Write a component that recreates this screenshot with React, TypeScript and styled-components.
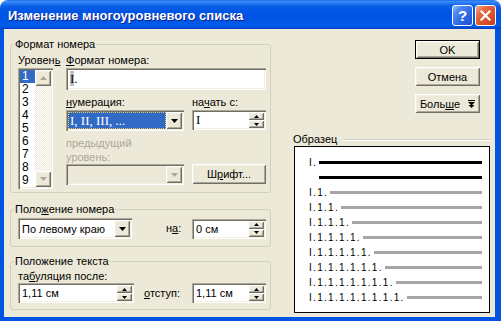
import styled, { createGlobalStyle } from "styled-components";

const GlobalStyle = createGlobalStyle`
  html, body {
    margin: 0;
    padding: 0;
    background: #ffffff;
  }
  body {
    font-family: "Liberation Sans", Arial, sans-serif;
    font-size: 11px;
    color: #000;
  }
  * {
    box-sizing: border-box;
  }
`;

const sunken = `
  box-shadow: inset 1px 1px 0 #aca899, inset 2px 2px 0 #716f64,
    inset -1px -1px 0 #ffffff, inset -2px -2px 0 #f1efe2;
`;

const raised = `
  box-shadow: inset 1px 1px 0 #ffffff, inset -1px -1px 0 #716f64,
    inset 2px 2px 0 #f1efe2, inset -2px -2px 0 #aca899;
`;

const Window = styled.div`
  width: 501px;
  height: 321px;
  display: flex;
  flex-direction: column;
`;

const TitleBar = styled.div`
  height: 29px;
  flex: none;
  display: flex;
  align-items: center;
  gap: 2px;
  padding: 2px 5px 0 8px;
  border-radius: 8px 8px 0 0;
  background: linear-gradient(
    to bottom,
    #0a5fe8 0,
    #3d8ef6 1px,
    #2b7cf2 3px,
    #0a5fe9 6px,
    #0055e5 12px,
    #0054e3 20px,
    #005cee 25px,
    #0052e0 27px,
    #003dc4 29px
  );
`;

const Title = styled.div`
  flex: 1;
  color: #fff;
  font: bold 13px "Liberation Sans", Arial, sans-serif;
  text-shadow: 1px 1px 0 #0f1f8a;
  white-space: nowrap;
`;

const CaptionButton = styled.div<{ $kind: "help" | "close" }>`
  width: 21px;
  height: 21px;
  border: 1px solid #ffffff;
  border-radius: 3px;
  display: flex;
  align-items: center;
  justify-content: center;
  color: #fff;
  font: bold 15px "Liberation Sans", Arial, sans-serif;
  background: ${(p) =>
    p.$kind === "help"
      ? "linear-gradient(135deg, #9dc0fa 0%, #4b88f2 25%, #2a66e4 65%, #1d50d2 100%)"
      : "linear-gradient(135deg, #f3ad94 0%, #e66b45 28%, #d9502a 65%, #c2401c 100%)"};
`;

const Frame = styled.div`
  flex: 1;
  display: flex;
  gap: 22px;
  padding: 9px 5px 0 6px;
  background: #ece9d8;
  border: solid #0054e3;
  border-width: 0 6px 4px 4px;
`;

const LeftColumn = styled.div`
  width: 261px;
  flex: none;
  display: flex;
  flex-direction: column;
`;

const Group = styled.fieldset<{ $pad: string; $mt?: number }>`
  margin: ${(p) => p.$mt ?? 0}px 0 0;
  padding: ${(p) => p.$pad};
  border: 1px solid #d0d0bf;
  border-radius: 3px;
  min-width: 0;
`;

const Legend = styled.legend`
  padding: 0 1px;
  margin-left: -4px;
  line-height: 13px;
  font-size: 11px;
`;

const Label = styled.div<{ $disabled?: boolean }>`
  line-height: 13px;
  white-space: nowrap;
  color: ${(p) => (p.$disabled ? "#aca899" : "#000")};
`;

const TwoLineLabel = styled(Label)`
  line-height: 14px;
`;

const U = styled.span`
  text-decoration: underline;
`;

const FormatLayout = styled.div`
  display: flex;
  gap: 13px;
`;

const LevelColumn = styled.div`
  width: 35px;
  display: flex;
  flex-direction: column;
  gap: 1px;
`;

const LevelList = styled.div`
  width: 35px;
  height: 121px;
  padding: 2px;
  display: flex;
  background: #fff;
  ${sunken}
`;

const LevelItems = styled.div`
  flex: 1;
  display: flex;
  flex-direction: column;
`;

const LevelItem = styled.div<{ $selected?: boolean }>`
  height: 13px;
  line-height: 13px;
  font-size: 12px;
  padding-left: 2px;
  color: ${(p) => (p.$selected ? "#fff" : "#000")};
  background: ${(p) => (p.$selected ? "#316ac5" : "transparent")};
`;

const ScrollBar = styled.div`
  width: 16px;
  display: flex;
  flex-direction: column;
`;

const ScrollTrack = styled.div`
  flex: 1;
  background-image: repeating-conic-gradient(#ffffff 0 25%, #ece9d8 0 50%);
  background-size: 2px 2px;
`;

const ArrowButton = styled.div<{ $h?: number }>`
  height: ${(p) => p.$h ?? 16}px;
  flex: none;
  display: flex;
  align-items: center;
  justify-content: center;
  background: #ece9d8;
  ${raised}
`;

const FormatFields = styled.div`
  width: 200px;
  display: flex;
  flex-direction: column;
`;

const Field = styled.div<{ $w?: number; $h: number; $mt?: number; $disabled?: boolean }>`
  width: ${(p) => (p.$w ? `${p.$w}px` : "auto")};
  height: ${(p) => p.$h}px;
  margin-top: ${(p) => p.$mt ?? 0}px;
  flex: none;
  padding: 2px;
  display: flex;
  align-items: stretch;
  background: ${(p) => (p.$disabled ? "#ece9d8" : "#ffffff")};
  ${sunken}
`;

const FieldText = styled.div<{ $serif?: boolean }>`
  flex: 1;
  display: flex;
  align-items: center;
  padding-left: 2px;
  white-space: nowrap;
  font-family: ${(p) =>
    p.$serif ? '"Liberation Serif", "Times New Roman", serif' : '"Liberation Sans", Arial, sans-serif'};
  font-size: ${(p) => (p.$serif ? "13px" : "11px")};
`;

const FormatText = styled.div`
  padding: 1px 0 0 2px;
  font: 13px "Liberation Serif", "Times New Roman", serif;
  line-height: 15px;
`;

const FieldShade = styled.span`
  background: #c0c0c0;
`;

const SelectedValue = styled.div`
  flex: 1;
  display: flex;
  align-items: center;
  padding-left: 1px;
  background: #316ac5;
  color: #fff;
  border: 1px dotted #e8c860;
  font: 13px "Liberation Serif", "Times New Roman", serif;
  white-space: nowrap;
`;

const DropButton = styled.div`
  width: 16px;
  flex: none;
  display: flex;
  align-items: center;
  justify-content: center;
  background: #ece9d8;
  ${raised}
`;

const SpinButtons = styled.div`
  width: 16px;
  flex: none;
  display: flex;
  flex-direction: column;
`;

const SpinButton = styled.div`
  flex: 1;
  display: flex;
  align-items: center;
  justify-content: center;
  background: #ece9d8;
  ${raised}
`;

const FieldGrid = styled.div`
  margin-top: 6px;
  display: grid;
  grid-template-columns: 118px 74px;
  grid-template-rows: 14px 26px 28px 21px;
  column-gap: 8px;
  align-items: start;
`;

const Button = styled.div<{ $default?: boolean; $w?: number; $h?: number }>`
  width: ${(p) => p.$w ?? 65}px;
  height: ${(p) => p.$h ?? 19}px;
  display: flex;
  align-items: center;
  justify-content: center;
  gap: 8px;
  background: #ece9d8;
  white-space: nowrap;
  border: ${(p) => (p.$default ? "1px solid #000" : "none")};
  ${raised}
`;

const PositionRow = styled.div`
  display: flex;
  align-items: center;
`;

const InlineLabel = styled(Label)<{ $ml: number }>`
  margin-left: ${(p) => p.$ml}px;
`;

const Spacer = styled.div`
  flex: 1;
`;

const RightColumn = styled.div`
  flex: 1;
  display: flex;
  flex-direction: column;
`;

const ButtonStack = styled.div`
  margin-top: 2px;
  padding-right: 10px;
  display: flex;
  flex-direction: column;
  align-items: flex-end;
  gap: 8px;
`;

const SampleHeader = styled.div`
  margin-top: 20px;
  height: 13px;
  display: flex;
  align-items: center;
  gap: 6px;
  line-height: 13px;
`;

const HeaderRule = styled.div`
  flex: 1;
  border-top: 1px solid #d0d0bf;
  border-bottom: 1px solid #ffffff;
`;

const Preview = styled.div`
  margin-left: 1px;
  height: 167px;
  padding: 8px 7px 0 14px;
  background: #fff;
  border: 1px solid #000;
  display: flex;
  flex-direction: column;
`;

const SampleRow = styled.div`
  height: 15px;
  display: flex;
  align-items: center;
`;

const SampleNumber = styled.span<{ $hidden?: boolean }>`
  font-size: 10px;
  letter-spacing: 1.3px;
  line-height: 15px;
  white-space: nowrap;
  visibility: ${(p) => (p.$hidden ? "hidden" : "visible")};
`;

const SampleLine = styled.div<{ $strong?: boolean }>`
  flex: 1;
  height: 3px;
  margin-left: 2px;
  background: ${(p) => (p.$strong ? "#000" : "#a6a6a6")};
`;

const Arrow = ({ dir, color = "#000", w = 7 }: { dir: "up" | "down"; color?: string; w?: number }) => {
  const h = Math.ceil(w / 2);
  const pts = dir === "down" ? `0,0 ${w},0 ${w / 2},${h}` : `0,${h} ${w},${h} ${w / 2},0`;
  return (
    <svg width={w} height={h} viewBox={`0 0 ${w} ${h}`}>
      <polygon points={pts} fill={color} />
    </svg>
  );
};

const MoreIcon = () => (
  <svg width="7" height="8" viewBox="0 0 7 8">
    <rect x="0" y="0" width="7" height="1" fill="#000" />
    <polygon points="0,2 7,2 3.5,5.5" fill="#000" />
    <polygon points="0.5,5 6.5,5 3.5,8" fill="#000" />
  </svg>
);

const CloseGlyph = () => (
  <svg width="11" height="11" viewBox="0 0 11 11">
    <path d="M1.5 1.5 L9.5 9.5 M9.5 1.5 L1.5 9.5" stroke="#fff" strokeWidth="2.2" strokeLinecap="square" />
  </svg>
);

const Combo = ({ w, children, disabled }: { w: number; children?: React.ReactNode; disabled?: boolean }) => (
  <Field $w={w} $h={21} $disabled={disabled}>
    {children ?? <Spacer />}
    <DropButton>
      <Arrow dir="down" color={disabled ? "#aca899" : "#000"} />
    </DropButton>
  </Field>
);

const Spin = ({ w, value, serif }: { w: number; value: string; serif?: boolean }) => (
  <Field $w={w} $h={20}>
    <FieldText $serif={serif}>{value}</FieldText>
    <SpinButtons>
      <SpinButton>
        <Arrow dir="up" w={5} />
      </SpinButton>
      <SpinButton>
        <Arrow dir="down" w={5} />
      </SpinButton>
    </SpinButtons>
  </Field>
);

const sampleRows = [
  "I.",
  "",
  "I.1.",
  "I.1.1.",
  "I.1.1.1.",
  "I.1.1.1.1.",
  "I.1.1.1.1.1.",
  "I.1.1.1.1.1.1.",
  "I.1.1.1.1.1.1.1.",
  "I.1.1.1.1.1.1.1.1.",
];

export default function App() {
  return (
    <>
      <GlobalStyle />
      <Window>
        <TitleBar>
          <Title>Изменение многоуровневого списка</Title>
          <CaptionButton $kind="help">?</CaptionButton>
          <CaptionButton $kind="close">
            <CloseGlyph />
          </CaptionButton>
        </TitleBar>
        <Frame>
          <LeftColumn>
            <Group $pad="3px 4px 3px 7px">
              <Legend>Формат номера</Legend>
              <FormatLayout>
                <LevelColumn>
                  <Label>
                    Уровен<U>ь</U>
                  </Label>
                  <LevelList>
                    <LevelItems>
                      {[1, 2, 3, 4, 5, 6, 7, 8, 9].map((n) => (
                        <LevelItem key={n} $selected={n === 1}>
                          {n}
                        </LevelItem>
                      ))}
                    </LevelItems>
                    <ScrollBar>
                      <ArrowButton>
                        <Arrow dir="up" color="#aca899" />
                      </ArrowButton>
                      <ScrollTrack />
                      <ArrowButton>
                        <Arrow dir="down" color="#aca899" />
                      </ArrowButton>
                    </ScrollBar>
                  </LevelList>
                </LevelColumn>
                <FormatFields>
                  <Label>
                    <U>Ф</U>ормат номера:
                  </Label>
                  <Field $w={200} $h={22} $mt={1}>
                    <FormatText>
                      <FieldShade>I</FieldShade>.
                    </FormatText>
                  </Field>
                  <FieldGrid>
                    <Label>
                      <U>н</U>умерация:
                    </Label>
                    <Label>
                      на<U>ч</U>ать с:
                    </Label>
                    <Combo w={118}>
                      <SelectedValue>I, II, III, ...</SelectedValue>
                    </Combo>
                    <Spin w={74} value="I" serif />
                    <TwoLineLabel $disabled>
                      предыдущий
                      <br />
                      уровень:
                    </TwoLineLabel>
                    <span />
                    <Combo w={118} disabled />
                    <Button $w={74} $h={20}>
                      <span>
                        Ш<U>р</U>ифт...
                      </span>
                    </Button>
                  </FieldGrid>
                </FormatFields>
              </FormatLayout>
            </Group>

            <Group $pad="2px 4px 7px 7px" $mt={10}>
              <Legend>
                Поло<U>ж</U>ение номера
              </Legend>
              <PositionRow>
                <Combo w={114}>
                  <FieldText>По левому краю</FieldText>
                </Combo>
                <InlineLabel $ml={34}>
                  н<U>а</U>:
                </InlineLabel>
                <Spacer />
                <Spin w={74} value="0 см" />
              </PositionRow>
            </Group>

            <Group $pad="2px 4px 6px 7px" $mt={8}>
              <Legend>Положение текста</Legend>
              <Label>
                та<U>б</U>уляция после:
              </Label>
              <PositionRow>
                <Spin w={116} value="1,11 см" />
                <InlineLabel $ml={10}>
                  <U>о</U>тступ:
                </InlineLabel>
                <Spacer />
                <Spin w={74} value="1,11 см" />
              </PositionRow>
            </Group>
          </LeftColumn>

          <RightColumn>
            <ButtonStack>
              <Button $default>OK</Button>
              <Button>Отмена</Button>
              <Button>
                <span>
                  Боль<U>ш</U>е
                </span>
                <MoreIcon />
              </Button>
            </ButtonStack>
            <SampleHeader>
              <span>Образец</span>
              <HeaderRule />
            </SampleHeader>
            <Preview>
              {sampleRows.map((text, i) => (
                <SampleRow key={i}>
                  <SampleNumber $hidden={text === ""}>{text || "I."}</SampleNumber>
                  <SampleLine $strong={i < 2} />
                </SampleRow>
              ))}
            </Preview>
          </RightColumn>
        </Frame>
      </Window>
    </>
  );
}
